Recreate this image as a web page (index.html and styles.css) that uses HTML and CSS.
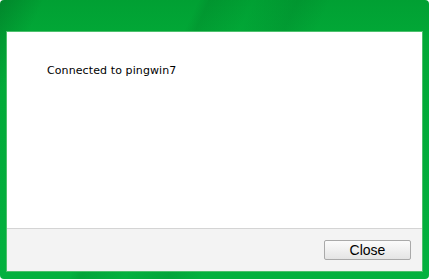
FILE: index.html
```html
<!DOCTYPE html>
<html>
<head>
<meta charset="utf-8">
<link rel="stylesheet" href="styles.css">
</head>
<body>
<div class="frame">
  <div class="panel">
    <div class="main">
      <p class="msg">Connected to pingwin7</p>
    </div>
    <div class="footer">
      <button class="btn">Close</button>
    </div>
  </div>
</div>
</body>
</html>
```
FILE: styles.css
```css
html, body {
  margin: 0;
  padding: 0;
}
body {
  width: 429px;
  height: 279px;
  overflow: hidden;
  font-family: "DejaVu Sans", sans-serif;
}
.frame {
  box-sizing: border-box;
  width: 429px;
  height: 279px;
  padding: 31px 6px 7px 6px;
  background:
    linear-gradient(115deg, rgba(0,60,20,0.25) 0px, rgba(0,60,20,0) 40px, rgba(0,0,0,0) 180px, rgba(0,70,20,0.12) 190px, rgba(0,0,0,0) 230px, rgba(0,60,20,0.10) 270px, rgba(0,0,0,0) 300px),
    linear-gradient(180deg, #01a033 0px, #02a937 40px, #03b13f 279px);
  border-radius: 4px;
}
.panel {
  box-sizing: border-box;
  height: 100%;
  border: 1px solid #4cc06c;
  background: #ffffff;
  display: flex;
  flex-direction: column;
}
.main {
  flex: 1;
  padding: 32px 0 0 40px;
}
.msg {
  margin: 0;
  font-size: 11px;
  letter-spacing: 0.1px;
  line-height: 13px;
  color: #000;
}
.footer {
  height: 43px;
  border-top: 1px solid #d4d4d4;
  background: #f3f3f3;
  display: flex;
  justify-content: flex-end;
  align-items: flex-start;
  padding: 11px 11px 0 0;
  box-sizing: border-box;
}
.btn {
  width: 87px;
  height: 20px;
  margin: 0;
  padding: 0;
  border: 1px solid #a9a9a9;
  border-radius: 2px;
  background: linear-gradient(180deg, #fbfbfb 0%, #f0f0f0 50%, #e4e4e4 100%);
  font-family: "Liberation Sans", Arial, sans-serif;
  font-size: 14px;
  line-height: 18px;
  color: #000;
}
```
